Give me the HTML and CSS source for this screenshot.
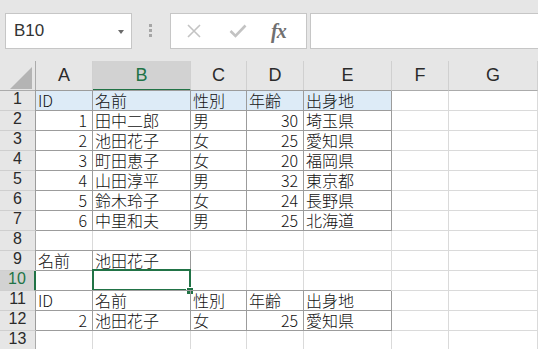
FILE: index.html
```html
<!DOCTYPE html>
<html lang="ja">
<head>
  <meta charset="UTF-8">
  <title>Sheet1</title>
  <link rel="stylesheet" href="styles.css">
</head>
<body>
  <div class="toolbar">
    <div class="namebox">
      <span>B10</span>
      <span class="arrow"></span>
    </div>
    <div class="grip"><i></i><i></i><i></i></div>
    <div class="fbuttons">
      <svg class="ico" width="16" height="16" viewBox="0 0 16 16">
        <path d="M2 2 L14 14 M14 2 L2 14" stroke="#c3c3c3" stroke-width="1.6" fill="none"/>
      </svg>
      <svg class="ico" width="18" height="16" viewBox="0 0 18 16">
        <path d="M1.5 8 L6.5 13 L16.5 2.5" stroke="#c3c3c3" stroke-width="2.6" fill="none"/>
      </svg>
      <span class="fx"><i>f</i><i>x</i></span>
    </div>
    <div class="formula"></div>
  </div>

  <div class="sheet">
    <div class="corner"></div>
    <div class="ch">A</div><div class="ch on">B</div><div class="ch">C</div><div class="ch">D</div><div class="ch">E</div><div class="ch">F</div><div class="ch">G</div>

    <div class="rh">1</div>
    <div class="c t h">ID</div><div class="c t h">名前</div><div class="c t h">性別</div><div class="c t h">年齢</div><div class="c t h">出身地</div><div class="c"></div><div class="c"></div>

    <div class="rh">2</div>
    <div class="c t n">1</div><div class="c t">田中二郎</div><div class="c t">男</div><div class="c t n">30</div><div class="c t">埼玉県</div><div class="c"></div><div class="c"></div>

    <div class="rh">3</div>
    <div class="c t n">2</div><div class="c t">池田花子</div><div class="c t">女</div><div class="c t n">25</div><div class="c t">愛知県</div><div class="c"></div><div class="c"></div>

    <div class="rh">4</div>
    <div class="c t n">3</div><div class="c t">町田恵子</div><div class="c t">女</div><div class="c t n">20</div><div class="c t">福岡県</div><div class="c"></div><div class="c"></div>

    <div class="rh">5</div>
    <div class="c t n">4</div><div class="c t">山田淳平</div><div class="c t">男</div><div class="c t n">32</div><div class="c t">東京都</div><div class="c"></div><div class="c"></div>

    <div class="rh">6</div>
    <div class="c t n">5</div><div class="c t">鈴木玲子</div><div class="c t">女</div><div class="c t n">24</div><div class="c t">長野県</div><div class="c"></div><div class="c"></div>

    <div class="rh">7</div>
    <div class="c t n">6</div><div class="c t">中里和夫</div><div class="c t">男</div><div class="c t n">25</div><div class="c t">北海道</div><div class="c"></div><div class="c"></div>

    <div class="rh">8</div>
    <div class="c"></div><div class="c"></div><div class="c"></div><div class="c"></div><div class="c"></div><div class="c"></div><div class="c"></div>

    <div class="rh">9</div>
    <div class="c t">名前</div><div class="c t">池田花子</div><div class="c"></div><div class="c"></div><div class="c"></div><div class="c"></div><div class="c"></div>

    <div class="rh on">10</div>
    <div class="c"></div><div class="c active"><span class="sel"></span><span class="handle"></span></div><div class="c"></div><div class="c"></div><div class="c"></div><div class="c"></div><div class="c"></div>

    <div class="rh">11</div>
    <div class="c t">ID</div><div class="c t">名前</div><div class="c t">性別</div><div class="c t">年齢</div><div class="c t">出身地</div><div class="c"></div><div class="c"></div>

    <div class="rh">12</div>
    <div class="c t n">2</div><div class="c t">池田花子</div><div class="c t">女</div><div class="c t n">25</div><div class="c t">愛知県</div><div class="c"></div><div class="c"></div>

    <div class="rh">13</div>
    <div class="c"></div><div class="c"></div><div class="c"></div><div class="c"></div><div class="c"></div><div class="c"></div><div class="c"></div>
  </div>
</body>
</html>
```
FILE: styles.css
```css
* {
  box-sizing: border-box;
}
body {
  margin: 0;
  width: 538px;
  height: 349px;
  overflow: hidden;
  background: #fff;
  font-family: 'Liberation Sans', Arial, sans-serif;
  color: #333;
}

/* formula bar */
.toolbar {
  display: flex;
  align-items: flex-start;
  height: 61px;
  padding-top: 13px;
  background: #e6e6e6;
}
.namebox {
  position: relative;
  width: 127px;
  height: 36px;
  margin-left: 5px;
  padding: 7px 0 0 8px;
  background: #fff;
  border: 1px solid #c6c6c6;
  font-size: 17px;
  color: #333;
}
.namebox .arrow {
  position: absolute;
  right: 7px;
  top: 16px;
  border-left: 3.5px solid transparent;
  border-right: 3.5px solid transparent;
  border-top: 4px solid #6a6a6a;
}
.grip {
  display: flex;
  flex-direction: column;
  gap: 2px;
  width: 38px;
  padding: 11px 0 0 17px;
}
.grip i {
  display: block;
  width: 3px;
  height: 3px;
  background: #a6a6a6;
}
.fbuttons {
  display: flex;
  align-items: center;
  width: 137px;
  height: 36px;
  background: #fff;
  border: 1px solid #c6c6c6;
  padding-left: 15px;
}
.fbuttons .ico {
  margin-right: 27px;
}
.fbuttons .ico + .ico {
  margin-right: 24px;
}
.fx {
  font-family: 'Liberation Serif', serif;
  font-size: 20px;
  font-weight: bold;
  color: #707070;
  letter-spacing: -1px;
}
.formula {
  flex: 1;
  height: 36px;
  margin-left: 3px;
  margin-right: -2px;
  background: #fff;
  border: 1px solid #c6c6c6;
}

/* grid */
.sheet {
  display: grid;
  grid-template-columns: 36px 57px 98px 56px 57px 88px 57px 1fr;
  grid-template-rows: 30px;
  grid-auto-rows: 20px;
}
.corner {
  position: relative;
  background: #e6e6e6;
  border-right: 1px solid #ababab;
  border-bottom: 1px solid #ababab;
}
.corner::after {
  content: '';
  position: absolute;
  right: 3px;
  bottom: 1px;
  border-left: 22px solid transparent;
  border-bottom: 22px solid #b4b4b4;
}
.ch {
  background: #e6e6e6;
  border-right: 1px solid #d0d0d0;
  border-bottom: 1px solid #ababab;
  text-align: center;
  font-size: 18px;
  line-height: 28px;
  color: #2b2b2b;
}
.ch.on {
  background: #d2d2d2;
  color: #217346;
  border-bottom: 2px solid #217346;
}
.rh {
  background: #e6e6e6;
  border-right: 1px solid #ababab;
  border-bottom: 1px solid #cfcfcf;
  text-align: center;
  font-size: 16px;
  line-height: 15px;
  color: #2b2b2b;
}
.rh.on {
  background: #d2d2d2;
  color: #217346;
  border-right: 2px solid #217346;
}
.c {
  position: relative;
  border-right: 1px solid #dadada;
  border-bottom: 1px solid #dadada;
  padding: 0 2px;
  font-family: 'Noto Sans CJK JP', sans-serif;
  font-size: 16px;
  font-weight: 300;
  line-height: 19px;
  color: #111;
  white-space: nowrap;
}
.c.t {
  border-right-color: #9c9c9c;
  border-bottom-color: #9c9c9c;
  box-shadow: -1px -1px 0 #9c9c9c;
}
.c.h {
  background: #ddebf7;
}
.c.n {
  text-align: right;
  padding-right: 5px;
}

/* selected cell */
.sel {
  position: absolute;
  left: -1px;
  top: -2px;
  width: 99px;
  height: 22px;
  border: 2px solid #217346;
}
.handle {
  position: absolute;
  left: 93px;
  top: 16px;
  width: 8px;
  height: 8px;
  background: #217346;
  border: 1px solid #fff;
}
```
